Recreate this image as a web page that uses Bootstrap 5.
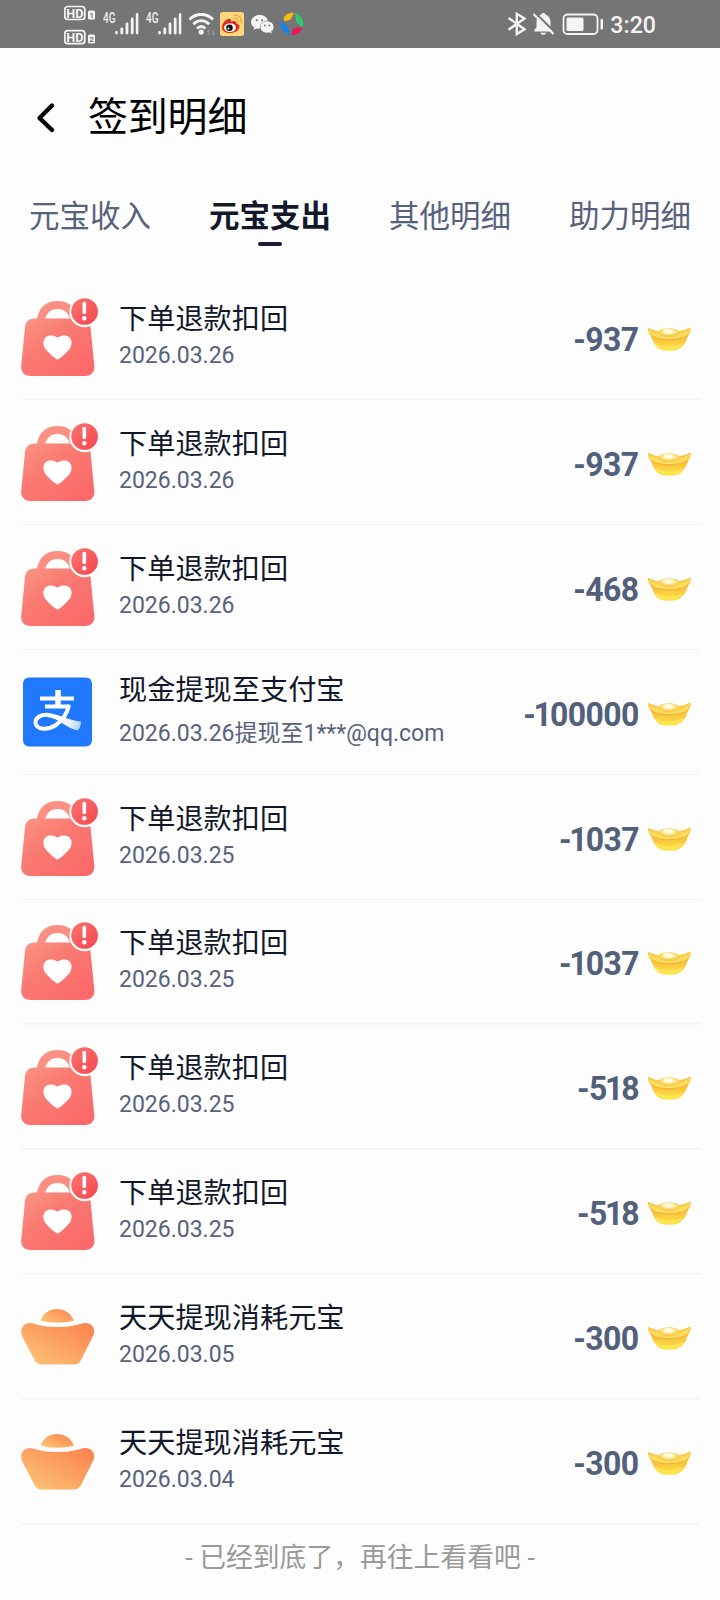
<!DOCTYPE html>
<html lang="zh-CN">
<head>
  <meta charset="UTF-8" />
  <meta name="viewport" content="width=device-width, initial-scale=1.0"/>
  <title>签到明细</title>
  <link rel="stylesheet" href="https://cdn.jsdelivr.net/npm/bootstrap@5.3.0/dist/css/bootstrap.min.css"/>
  <style>
    body {
      background: #fdfdfd;
      font-family: Roboto, "Noto Sans CJK SC", sans-serif;
      color: #12182b;
      overflow-x: hidden;
    }
    .status-bar {
      height: 48px;
      padding-left: 64px;
      padding-right: 64px;
      background: #757575;
      color: #f4f4f4;
    }
    .status-bar svg {
      display: block;
      flex: none;
    }
    .gap-a {
      margin-left: 7px;
    }
    .gap-b {
      margin-left: 6px;
    }
    .clock {
      font-size: 23.2px;
      font-weight: 500;
      line-height: 48px;
      padding-top: 1px;
      margin-left: 6px;
    }
    .page-head {
      height: 138px;
      padding: 1px 0 0 33px;
      color: #000;
    }
    .page-head h1 {
      font-size: 40px;
      font-weight: 400;
      line-height: 60px;
      margin: 0 0 0 31px;
      letter-spacing: -.2px;
    }
    .page-head svg {
      margin-top: -1px;
    }
    .detail-tabs {
      height: 89.6px;
    }
    .detail-tabs .nav-link {
      padding: 8px 0 0;
      font-size: 30.5px;
      line-height: 46px;
      color: #56627c;
    }
    .detail-tabs .nav-link.active {
      font-weight: 700;
      color: #12182b;
    }
    .detail-tabs .nav-link.active::after {
      content: "";
      display: block;
      width: 24px;
      height: 4px;
      margin: 2px auto 0;
      border-radius: 2px;
      background: #1a1f36;
    }
    .record {
      height: 124.9px;
      margin: 0 20px;
      padding: 0 8px 2px 0;
      background: linear-gradient(#f3f3f4, #f3f3f4) 2px 100% / 678px 1.5px no-repeat;
    }
    .record-icon {
      width: 80px;
      height: 80px;
      margin-right: 19px;
      flex: none;
    }
    .record-text {
      padding-bottom: 3px;
    }
    .record-title {
      font-size: 28.2px;
      line-height: 40px;
    }
    .record-date {
      font-size: 23px;
      line-height: 31px;
      color: #56627c;
    }
    .record-wide .record-text {
      padding: 5px 0 0;
    }
    .record-wide .record-date {
      line-height: 46px;
    }
    .amount {
      font-size: 34px;
      font-weight: 700;
      line-height: 40px;
      letter-spacing: -.6px;
      padding-top: 4px;
      color: #52607b;
      transform: scaleX(.94);
      transform-origin: right;
    }
    .amount i {
      font-style: normal;
      margin: 0 -1.5px 0 -2px;
    }
    .gold {
      width: 45px;
      height: 26px;
      margin: 4px 0 0 8px;
      flex: none;
    }
    .list-end {
      font-size: 26.8px;
      line-height: 40px;
      padding-top: 13px;
      color: #999;
    }
  </style>
</head>
<body>
  <!-- Shared icons -->
  <svg width="0" height="0" class="position-absolute" aria-hidden="true">
    <defs>
      <linearGradient id="bagFill" x1="0" y1="0" x2="1" y2="1">
        <stop offset="0" stop-color="#fa9583"/>
        <stop offset=".4" stop-color="#f97a72"/>
        <stop offset="1" stop-color="#fb6667"/>
      </linearGradient>
      <linearGradient id="badgeFill" x1="0" y1="0" x2="1" y2="1">
        <stop offset="0" stop-color="#fb7570"/>
        <stop offset="1" stop-color="#f64550"/>
      </linearGradient>
      <linearGradient id="potFill" x1="0" y1="1" x2="1" y2="0">
        <stop offset="0" stop-color="#fdc878"/>
        <stop offset=".55" stop-color="#fca05f"/>
        <stop offset="1" stop-color="#fc8050"/>
      </linearGradient>
      <linearGradient id="goldFill" x1="0" y1="0" x2="0" y2="1">
        <stop offset="0" stop-color="#fbc94a"/>
        <stop offset=".55" stop-color="#fac63e"/>
        <stop offset="1" stop-color="#feea4e"/>
      </linearGradient>
      <radialGradient id="goldTop" cx=".5" cy=".4" r=".6">
        <stop offset="0" stop-color="#fffbd8"/>
        <stop offset=".5" stop-color="#fde67a"/>
        <stop offset="1" stop-color="#f5b945"/>
      </radialGradient>
      <linearGradient id="payTail" gradientUnits="userSpaceOnUse" x1="30" y1="44" x2="61" y2="56">
        <stop offset="0" stop-color="#fff"/>
        <stop offset=".6" stop-color="#eef5ff"/>
        <stop offset="1" stop-color="#a9cdfd"/>
      </linearGradient>
    </defs>
    <symbol id="icon-bag" viewBox="0 0 80 80">
      <path d="M20.500 24C22.500 12.500 29 8 37.500 8S52.500 12.500 54.500 24" fill="none" stroke="#fb8f83" stroke-width="8"/>
      <path d="M14 21.500H61.500C66.500 21.500 69.800 25 70.500 30L74.300 69C74.800 75 71 79 65 79H10.500C4.500 79 .7 75 1.200 69L5 30C5.600 25 9 21.500 14 21.500Z" fill="url(#bagFill)"/>
      <path d="M37.500 62.500C36 62.500 26 54 24.500 50.500C21.500 43.500 25 38.500 30.500 38.500C34.500 38.500 36 40 37.500 40.500C39 40 40.500 38.500 44.500 38.500C50 38.500 53.500 43.500 50.500 50.500C49 54 39 62.500 37.500 62.500Z" fill="#fff"/>
      <circle cx="64.600" cy="15" r="15.300" fill="#fdfdfd"/>
      <circle cx="64.600" cy="14.500" r="13.300" fill="url(#badgeFill)"/>
      <path d="M64.300 6.500V15.500" stroke="#fff" stroke-width="3.600" stroke-linecap="round"/>
      <circle cx="64.300" cy="21.200" r="2.200" fill="#fff"/>
    </symbol>
    <symbol id="icon-alipay" viewBox="0 0 80 80">
      <rect x="3" y="5.500" width="69" height="69" rx="6" fill="#2079fc"/>
      <path d="M38 18V34" stroke="#fff" stroke-width="5.500" fill="none"/>
      <path d="M20 26.500H54M25 34.500H50" stroke="#fff" stroke-width="3.800" fill="none"/>
      <path d="M49 33C47 42 43 48 36 53C28 58.500 16.500 58 15.500 51C15 45 22 42 29 43" stroke="#fff" stroke-width="4" fill="none"/>
      <path d="M22 41.500C35 39 44 48 61 49.500C61 53 60 56.500 57.500 58.500C46 56 39 46 27 45Z" fill="url(#payTail)"/>
    </symbol>
    <symbol id="icon-pot" viewBox="0 0 80 80">
      <path d="M20.500 24.500C24 16.500 30 13 37 13S50 16.500 54 24.500C44 27.500 31 27.500 20.500 24.500Z" fill="url(#potFill)"/>
      <path d="M10 27C15 27 19 31 37.500 31S60 27 65.500 27C72 27 76 33 73.500 39L61.500 63C59.500 67 57 68.500 53.500 68.500H22C18.500 68.500 16 67 14 63L2.500 41C-1 34 3 27 10 27Z" fill="url(#potFill)"/>
    </symbol>
    <symbol id="icon-gold" viewBox="0 0 46 26">
      <path d="M1 1.500C4 3 8 4.500 12 5C17 1.500 28 1 33 5C37 4.500 41 3 44.500 1C45.500 3.500 44 7 42 10C39.500 18 36 22 31.500 24C27 25.500 18 25.500 14 24C9.500 22 6.500 17 4.500 11C2.500 8 .3 4.500 1 1.500Z" fill="url(#goldFill)"/>
      <path d="M1.500 3C9 10 36 10.500 44 2.500C42 10 37 13 23 13S4 10 1.500 3Z" fill="#fddc5e"/>
      <path d="M4.500 10.500C12 15 34 15 42 9.500" fill="none" stroke="#f3b03a" stroke-width="1"/>
      <ellipse cx="22.500" cy="6.500" rx="11" ry="4.200" fill="url(#goldTop)"/>
      <ellipse cx="22" cy="5.200" rx="5.500" ry="2.300" fill="#fffbe0"/>
      <path d="M9 18C14 23 31 23 36 17.500" fill="none" stroke="#fff06a" stroke-width="1.500" opacity=".6"/>
    </symbol>
    <symbol id="icon-bars" viewBox="0 0 24 48">
      <path d="M2 33V32.500M7.300 33V29M12.500 33V24M17.700 33V19M22.700 33V14.500" stroke="#f4f4f4" stroke-width="2.800" stroke-linecap="round"/>
    </symbol>
  </svg>

  <!-- Status bar -->
  <div class="status-bar d-flex align-items-center justify-content-between">
    <div class="d-flex">
      <svg width="32" height="48" viewBox="64 0 32 48" fill="#f4f4f4">
        <g fill="none" stroke="#f4f4f4" stroke-width="1.700">
          <rect x="64.800" y="6.500" width="20" height="13" rx="3"/>
          <rect x="64.800" y="30.700" width="20" height="13" rx="3"/>
        </g>
        <g font-size="13.500" font-weight="700">
          <text x="66.200" y="17.900" textLength="17.200" lengthAdjust="spacingAndGlyphs">HD</text>
          <text x="66.200" y="42.100" textLength="17.200" lengthAdjust="spacingAndGlyphs">HD</text>
        </g>
        <rect x="88" y="10.500" width="7" height="9" rx="1.500"/>
        <rect x="88" y="34.500" width="7" height="9" rx="1.500"/>
        <g font-size="8" font-weight="700" fill="#757575">
          <text x="89.200" y="18">1</text>
          <text x="89.200" y="42">2</text>
        </g>
      </svg>
      <svg class="gap-a" width="36" height="48" viewBox="0 0 36 48">
        <text x="0" y="23" font-size="14" font-weight="500" textLength="12.500" lengthAdjust="spacingAndGlyphs" fill="#f0f0f0">4G</text>
        <use href="#icon-bars" x="11.500" width="24" height="48"/>
      </svg>
      <svg class="gap-a" width="36" height="48" viewBox="0 0 36 48">
        <text x="0" y="23" font-size="14" font-weight="500" textLength="12.500" lengthAdjust="spacingAndGlyphs" fill="#f0f0f0">4G</text>
        <use href="#icon-bars" x="11.500" width="24" height="48"/>
      </svg>
      <svg class="gap-b" width="28" height="48" viewBox="188 0 28 48" fill="none" stroke="#f4f4f4" stroke-width="2.800">
        <path d="M189.500 19.500C196 12.800 206.500 12.800 213 19.500M193.300 24.300C198 19.400 204.500 19.400 209.200 24.300M197 28.600C199.700 26 202.800 26 205.500 28.600"/>
        <circle cx="201.200" cy="32" r="2.600" fill="#f4f4f4" stroke="none"/>
        <path d="M209 35V30M207.300 31.800L209 29.800M213 30V35M214.700 33L213 35" stroke="#999" stroke-width="1.200"/>
      </svg>
      <svg class="ms-1" width="24" height="48" viewBox="220 0 24 48">
        <rect x="220" y="12" width="24" height="24" rx="2.500" fill="#fbd978"/>
        <path d="M222 27.500C222 23 227 18 230 19C231.500 19.500 231 21 231 21.500C233 20.500 237 20.500 236.500 23.500C239.500 24.500 240 26.500 239 28.500C237.500 31.500 233.500 33 230 33C225.500 33 222 31 222 27.500Z" fill="#e02a20"/>
        <ellipse cx="230" cy="27.600" rx="6" ry="4.300" fill="#fff"/>
        <circle cx="229.500" cy="27.800" r="3.300" fill="#111"/>
        <circle cx="228.500" cy="28.500" r="1" fill="#fff"/>
        <path d="M234.500 18.500C237 18 239 20 238.300 22.500M234.300 15.500C239 14.500 242.500 18.500 241.200 23" fill="none" stroke="#f0a84c" stroke-width="1.400" stroke-linecap="round"/>
      </svg>
      <svg class="gap-a" width="23" height="48" viewBox="251 0 23 48" fill="#f4f4f4">
        <path d="M259.500 15C255 15 251 18 251 22C251 24.500 252.300 26.300 254.300 27.500L253.500 30L256.500 28.400C257.500 28.700 258.700 28.800 259.700 28.800C259.700 23.500 263.500 20.500 267.800 20.500C267 17 263.500 15 259.500 15Z"/>
        <path d="M267 21.300C263.300 21.300 260.500 23.700 260.500 27C260.500 30.300 263.300 32.700 267 32.700C267.800 32.700 268.600 32.500 269.300 32.300L271.700 33.700L271 31.500C272.600 30.500 273.600 29 273.600 27C273.600 23.700 270.600 21.300 267 21.300Z"/>
        <g fill="#757575">
          <circle cx="256.700" cy="20.300" r="1"/><circle cx="262" cy="20.300" r="1"/>
          <circle cx="264.800" cy="25.500" r=".9"/><circle cx="269.300" cy="25.500" r=".9"/>
        </g>
      </svg>
      <svg class="gap-b" width="24" height="48" viewBox="280 0 24 48">
        <path d="M283.500 18C286 13.500 291 12 294 13L290.500 19.500L284.500 21.500Z" fill="#fbb90c"/>
        <path d="M294.500 13C300 14 303.500 19 303.300 24.500C303.200 26 302.500 27.500 301.500 27.500L296.500 22Z" fill="#2fc96b"/>
        <path d="M291 34.800L293.500 28.500L302.700 27C301.500 32 296 36 291 34.800Z" fill="#f0145a"/>
        <path d="M282.500 20.500L287.500 27.500L290.500 34.800C285 34 281 29.500 281 24.500C281 22.500 281.500 20.500 282.500 20.500Z" fill="#1384f5"/>
      </svg>
    </div>
    <div class="d-flex">
      <svg width="19" height="48" viewBox="507 0 19 48" fill="none" stroke="#f4f4f4" stroke-width="2.400">
        <path d="M508.500 18L524.500 29.200L516.800 34V13.800L524.500 18.500L508.500 29.700"/>
      </svg>
      <svg class="gap-a" width="22" height="48" viewBox="534 0 22 48" fill="#f4f4f4">
        <path d="M535.500 31.500V29.500L537.500 27.500V22C537.500 18 539.500 15.500 542 14.800C542.300 12.400 546.300 12.400 546.600 14.800C550 15.800 551.500 18.500 551.500 22V27.500L553.500 29.500V31.500Z"/>
        <path d="M541.500 32.800H547C546.500 35.500 542 35.500 541.500 32.800Z"/>
        <path d="M536 12.500L556 32.500" stroke="#757575" stroke-width="2"/>
        <path d="M534.500 14L554.500 34" stroke="#f4f4f4" stroke-width="2"/>
      </svg>
      <svg class="gap-a" width="42" height="48" viewBox="563 0 42 48" fill="#f4f4f4">
        <rect x="564.500" y="14.500" width="34" height="19.500" rx="4" fill="none" stroke="#f4f4f4" stroke-width="1.800"/>
        <rect x="567.500" y="17.500" width="17" height="13.500" rx="1.500"/>
        <rect x="601.500" y="19" width="2.500" height="10.500" rx="1"/>
      </svg>
      <span class="clock">3:20</span>
    </div>
  </div>

  <!-- Title -->
  <header class="page-head d-flex align-items-center">
    <svg width="24" height="36" viewBox="0 0 24 36" fill="none" stroke="#000" stroke-width="4.400" stroke-linecap="round" stroke-linejoin="round">
      <path d="M19 6.500L6.500 19L19 31"/>
    </svg>
    <h1>签到明细</h1>
  </header>

  <nav class="nav nav-fill detail-tabs flex-nowrap">
    <a class="nav-link col-3" href="#">元宝收入</a>
    <a class="nav-link col-3 active" href="#">元宝支出</a>
    <a class="nav-link col-3" href="#">其他明细</a>
    <a class="nav-link col-3" href="#">助力明细</a>
  </nav>

  <main id="records"></main>
  <div class="list-end text-center">- 已经到底了，再往上看看吧 -</div>

  <script>
    const records = [
      { icon: "bag", title: "下单退款扣回", date: "2026.03.26", amount: "-937" },
      { icon: "bag", title: "下单退款扣回", date: "2026.03.26", amount: "-937" },
      { icon: "bag", title: "下单退款扣回", date: "2026.03.26", amount: "-468" },
      { icon: "alipay", title: "现金提现至支付宝", date: "2026.03.26提现至1***@qq.com", amount: "-100000", wide: true },
      { icon: "bag", title: "下单退款扣回", date: "2026.03.25", amount: "-1037" },
      { icon: "bag", title: "下单退款扣回", date: "2026.03.25", amount: "-1037" },
      { icon: "bag", title: "下单退款扣回", date: "2026.03.25", amount: "-518" },
      { icon: "bag", title: "下单退款扣回", date: "2026.03.25", amount: "-518" },
      { icon: "pot", title: "天天提现消耗元宝", date: "2026.03.05", amount: "-300" },
      { icon: "pot", title: "天天提现消耗元宝", date: "2026.03.04", amount: "-300" }
    ];

    document.getElementById("records").innerHTML = records.map(r => `
      <div class="record d-flex align-items-center ${r.wide ? "record-wide" : ""}">
        <svg class="record-icon"><use href="#icon-${r.icon}"/></svg>
        <div class="record-text flex-grow-1">
          <div class="record-title">${r.title}</div>
          <div class="record-date">${r.date}</div>
        </div>
        <div class="amount">${r.amount.replace("1", "<i>1</i>")}</div>
        <svg class="gold"><use href="#icon-gold"/></svg>
      </div>
    `).join("");
  </script>

  <script src="https://cdn.jsdelivr.net/npm/bootstrap@5.3.0/dist/js/bootstrap.bundle.min.js"></script>
</body>
</html>
